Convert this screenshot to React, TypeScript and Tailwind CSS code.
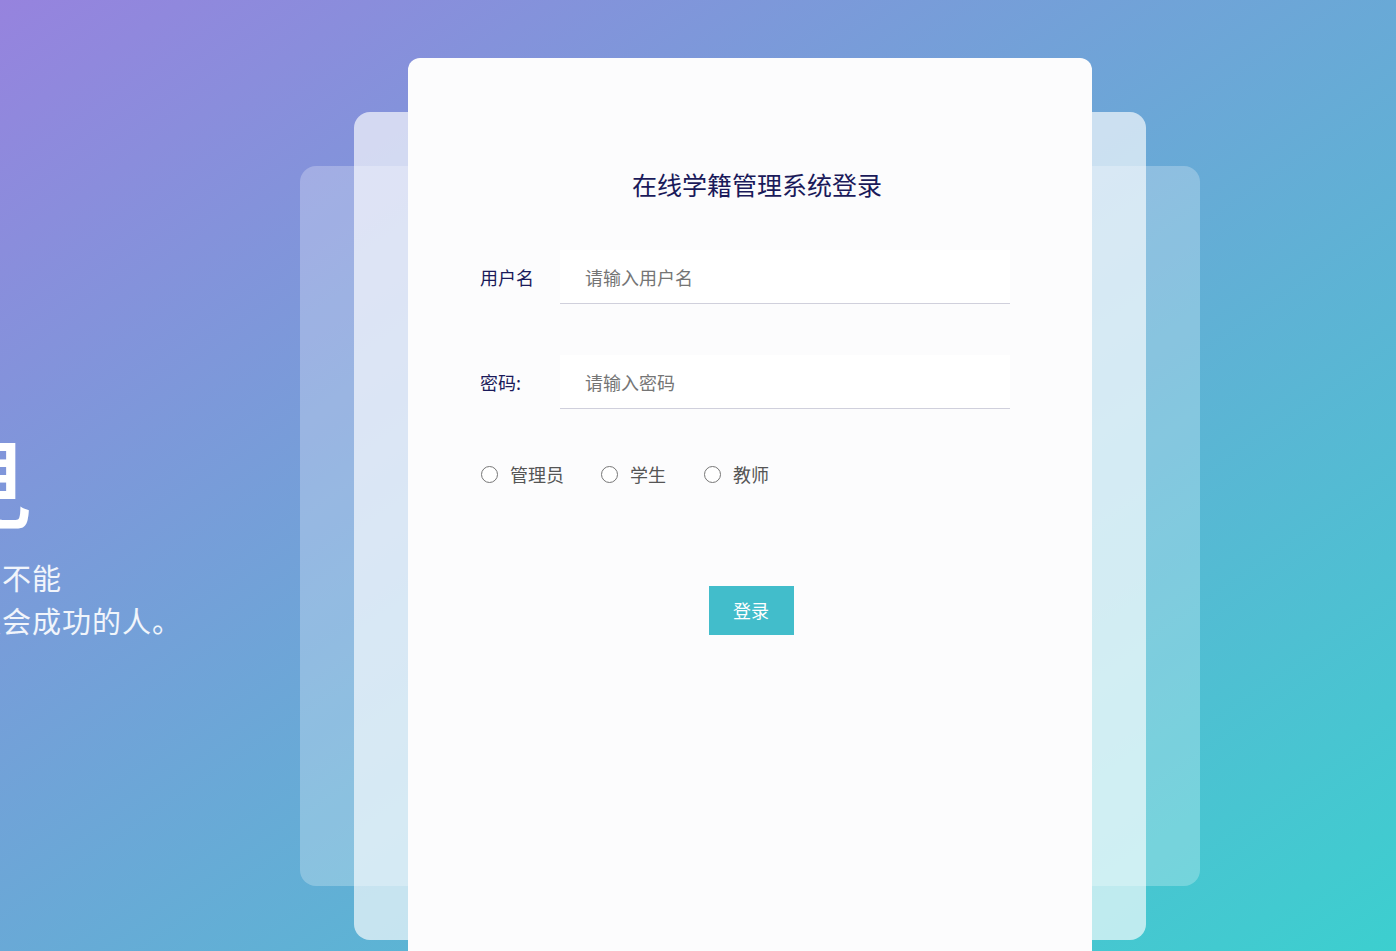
import { useState } from "react";

const cjk = "font-['Noto_Sans_CJK_SC','Noto_Sans',sans-serif]";

export default function App() {
  const [username, setUsername] = useState("");
  const [password, setPassword] = useState("");
  const [role, setRole] = useState<string | null>(null);

  const roles = [
    { value: "admin", label: "管理员", gap: "mr-[37px]" },
    { value: "student", label: "学生", gap: "mr-[38px]" },
    { value: "teacher", label: "教师", gap: "" },
  ];

  return (
    <div
      className={`${cjk} w-full h-[951px] overflow-hidden bg-[linear-gradient(to_bottom_right,#9683de,#3ccfcf)] flex items-start`}
    >
      {/* Slogan, mostly off the left edge */}
      <div className="shrink-0 w-[538px] -ml-[238px] mt-[432px] text-white">
        <h1 className="-ml-[15px] text-[95px] leading-none font-medium tracking-normal">
          再遇見
        </h1>
        <p className="mt-[29px] text-[29px] leading-[43px] tracking-[1px] text-white/90">
          勤奋学习，没什么不能
        </p>
        <p className="text-[29px] leading-[43px] tracking-[1px] text-white/90">
          努力的人，终将是会成功的人。
        </p>
      </div>

      {/* Card stack */}
      <div className="relative shrink-0 w-[900px] h-[951px] pt-[58px]">
        <div className="absolute left-0 top-[166px] w-[900px] h-[720px] rounded-2xl bg-white/25" />
        <div className="absolute left-[54px] top-[112px] w-[792px] h-[828px] rounded-2xl bg-white/65" />

        <div className="relative mx-[108px] h-[960px] rounded-xl bg-[#fcfcfd] pt-[107px] pl-[72px] pr-[82px]">
          <h2 className="text-center text-[25px] leading-[38px] text-[#1a1a5a] pl-[24px]">
            在线学籍管理系统登录
          </h2>

          <div className="mt-[47px] flex items-center">
            <label className="w-[80px] text-[18px] text-[#1a1a5a]">用户名</label>
            <input
              value={username}
              onChange={(e) => setUsername(e.target.value)}
              placeholder="请输入用户名"
              className="w-[450px] h-[54px] bg-white border-b border-[#d0d0dc] px-[25px] text-[18px] text-[#333] placeholder:text-[#757575] outline-none"
            />
          </div>

          <div className="mt-[51px] flex items-center">
            <label className="w-[80px] text-[18px] text-[#1a1a5a]">密码:</label>
            <input
              type="password"
              value={password}
              onChange={(e) => setPassword(e.target.value)}
              placeholder="请输入密码"
              className="w-[450px] h-[54px] bg-white border-b border-[#d0d0dc] px-[25px] text-[18px] text-[#333] placeholder:text-[#757575] outline-none"
            />
          </div>

          {/* Role radios */}
          <div className="mt-[54px] flex items-center h-[22px] pl-px">
            {roles.map((r) => (
              <label key={r.value} className={`flex items-center cursor-pointer ${r.gap}`}>
                <input
                  type="radio"
                  name="role"
                  checked={role === r.value}
                  onChange={() => setRole(r.value)}
                  className="appearance-none w-[17px] h-[17px] rounded-full border border-[#767676] bg-white checked:border-[5px] checked:border-[#42bdcb]"
                />
                <span className="ml-[12px] text-[18px] leading-[22px] text-[#555]">
                  {r.label}
                </span>
              </label>
            ))}
          </div>

          <div className="mt-[101px] flex justify-center pl-[12px]">
            <button
              type="button"
              className="w-[85px] h-[49px] bg-[#42bdcb] text-white text-[18px]"
            >
              登录
            </button>
          </div>
        </div>
      </div>
    </div>
  );
}
